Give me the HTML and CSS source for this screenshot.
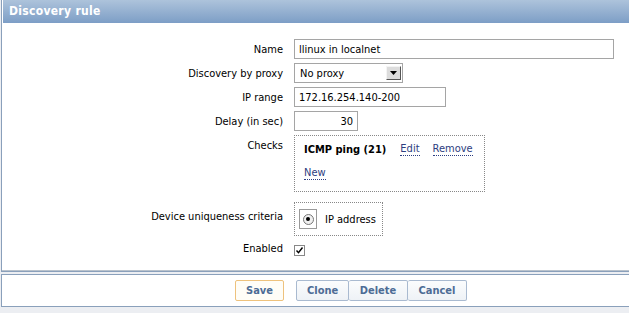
FILE: index.html
```html
<!DOCTYPE html>
<html lang="en">
<head>
  <meta charset="UTF-8" />
  <title>Discovery rule</title>
  <link rel="stylesheet" href="styles.css">
</head>
<body>
  <div class="frame">
    <div class="form-box">
      <div class="form-head">Discovery rule</div>

      <div class="form-grid">
        <label class="row-label" for="name">Name</label>
        <input type="text" id="name" class="field field-name" value="llinux in localnet" />

        <label class="row-label">Discovery by proxy</label>
        <div class="select-box">
          <span class="select-value">No proxy</span>
          <span class="select-arrow">
            <svg width="7" height="4" viewBox="0 0 7 4"><path d="M0 0h7L3.5 4z" fill="#000"/></svg>
          </span>
        </div>

        <label class="row-label" for="iprange">IP range</label>
        <input type="text" id="iprange" class="field field-ip" value="172.16.254.140-200" />

        <label class="row-label" for="delay">Delay (in sec)</label>
        <input type="text" id="delay" class="field field-delay" value="30" />

        <label class="row-label label-top">Checks</label>
        <div class="checks-box">
          <div class="check-line">
            <span class="check-name">ICMP ping (21)</span>
            <a class="link" href="#">Edit</a>
            <a class="link" href="#">Remove</a>
          </div>
          <div class="check-line">
            <a class="link" href="#">New</a>
          </div>
        </div>

        <label class="row-label">Device uniqueness criteria</label>
        <div class="unique-box">
          <span class="radio-frame"><span class="radio"><span class="radio-dot"></span></span></span>
          <span>IP address</span>
        </div>

        <label class="row-label" for="enabled">Enabled</label>
        <span class="checkbox">
          <svg width="9" height="9" viewBox="0 0 9 9"><path d="M1.5 4.5l2 2.2L7.5 1.5" fill="none" stroke="#000" stroke-width="1.4"/></svg>
        </span>
      </div>
    </div>

    <div class="button-box">
      <button type="button" class="btn btn-save">Save</button>
      <div class="btn-group">
        <button type="button" class="btn">Clone</button>
        <button type="button" class="btn">Delete</button>
        <button type="button" class="btn">Cancel</button>
      </div>
    </div>
  </div>
</body>
</html>
```

FILE: styles.css
```css
html, body {
  margin: 0;
  padding: 0;
}

body {
  font-family: "DejaVu Sans Condensed", "DejaVu Sans", sans-serif;
  font-size: 11px;
  color: #000;
  background: #eceef2;
  overflow: hidden;
  height: 313px;
}

.frame {
  width: 628px;
  padding-left: 1px;
}

.form-box {
  background: #fff;
  border-left: 1px solid #8aa0bb;
  border-bottom: 1px solid #8aa0bb;
  box-shadow: 0 -1px 0 #b9c2cc inset;
  height: 272px;
  box-sizing: border-box;
}

.form-head {
  height: 23px;
  margin-left: 1px;
  padding-left: 6px;
  line-height: 22px;
  font-size: 12px;
  font-weight: bold;
  letter-spacing: 0.3px;
  color: #fff;
  background: linear-gradient(to bottom, #adc3db, #7d9ec6);
}

/* label column + field column */
.form-grid {
  display: grid;
  grid-template-columns: 281px auto;
  column-gap: 11px;
  row-gap: 4px;
  align-items: center;
  justify-items: start;
  padding-top: 16px;
}

.row-label {
  justify-self: end;
  white-space: nowrap;
}

.label-top {
  align-self: start;
  padding-top: 4px;
}

.field {
  height: 20px;
  box-sizing: border-box;
  border: 1px solid #a5a5a5;
  padding: 0 4px;
  font-family: inherit;
  font-size: 11px;
  margin: 0;
}

.field-name {
  width: 320px;
}

.field-ip {
  width: 152px;
}

.field-delay {
  width: 64px;
  text-align: right;
}

.select-box {
  width: 109px;
  height: 20px;
  box-sizing: border-box;
  border: 1px solid #a5a5a5;
  display: flex;
  align-items: center;
  justify-content: space-between;
  padding: 0 1px 0 5px;
}

.select-arrow {
  width: 15px;
  height: 14px;
  box-sizing: border-box;
  background: #dcdcdc;
  border: 1px solid;
  border-color: #f4f4f4 #555 #555 #f4f4f4;
  display: flex;
  align-items: center;
  justify-content: center;
}

.checks-box {
  width: 191px;
  height: 57px;
  box-sizing: border-box;
  border: 1px dotted #888;
  padding: 4px 0 4px 9px;
}

.check-line {
  display: flex;
  gap: 13px;
  height: 18px;
  align-items: center;
  margin-bottom: 6px;
  white-space: nowrap;
}

.check-name {
  font-weight: bold;
  margin-right: 1px;
}

.link {
  color: #2d3d80;
  text-decoration: none;
  border-bottom: 1px dotted #2d3d80;
  line-height: 12px;
}

.unique-box {
  width: 89px;
  height: 34px;
  box-sizing: border-box;
  border: 1px dotted #888;
  display: flex;
  align-items: center;
  gap: 8px;
  padding-left: 4px;
  margin-top: 6px;
}

.radio-frame {
  width: 18px;
  height: 20px;
  box-sizing: border-box;
  border: 1px solid #999;
  display: flex;
  align-items: center;
  justify-content: center;
}

.radio {
  width: 9px;
  height: 9px;
  border-radius: 50%;
  border: 1px solid #777;
  background: #f0f0f0;
  display: flex;
  align-items: center;
  justify-content: center;
}

.radio-dot {
  width: 4px;
  height: 4px;
  border-radius: 50%;
  background: #000;
}

.checkbox {
  width: 11px;
  height: 11px;
  box-sizing: border-box;
  border: 1px solid #888;
  display: flex;
  align-items: center;
  justify-content: center;
  margin-top: 5px;
}

.button-box {
  margin-top: 2px;
  height: 33px;
  box-sizing: border-box;
  background: #fff;
  border: 1px solid #8aa0bb;
  border-right: none;
  display: flex;
  align-items: center;
  gap: 12px;
  padding-left: 233px;
}

.btn-group {
  display: flex;
}

.btn {
  height: 21px;
  padding: 0 10px;
  font-family: inherit;
  font-size: 11px;
  font-weight: bold;
  color: #4d6c95;
  background: linear-gradient(to bottom, #fbfcfd, #eef2f6);
  border: 1px solid #a9bad0;
  border-radius: 2px;
  margin: 0;
  cursor: pointer;
}

.btn-group .btn + .btn {
  border-left: none;
}

.btn-group .btn {
  width: 59px;
}

.btn-group .btn:first-child {
  width: 53px;
}

.btn-save {
  width: 49px;
  border-color: #eec27d;
  background: #fffdf7;
}
```
